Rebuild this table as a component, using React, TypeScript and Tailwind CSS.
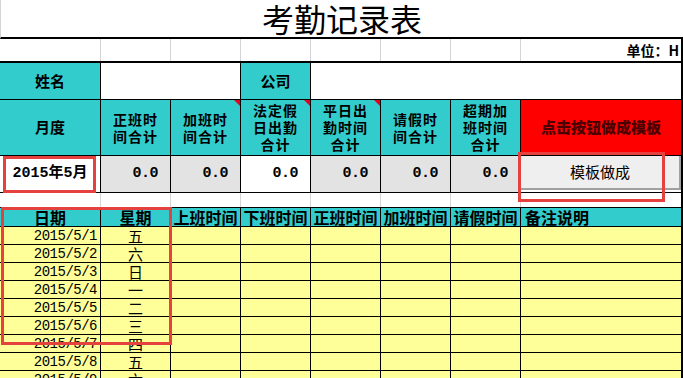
import React from "react";

const cjk = { fontFamily: '"Noto Sans CJK SC", "Liberation Sans", sans-serif' };
const mono = { fontFamily: '"Liberation Mono", "Noto Sans CJK SC", monospace' };

const days = [
  ["2015/5/1", "五"],
  ["2015/5/2", "六"],
  ["2015/5/3", "日"],
  ["2015/5/4", "一"],
  ["2015/5/5", "二"],
  ["2015/5/6", "三"],
  ["2015/5/7", "四"],
  ["2015/5/8", "五"],
  ["2015/5/9", "六"],
];

function Flag() {
  return (
    <span className="absolute right-0 top-0 h-0 w-0 border-l-[6px] border-t-[6px] border-l-transparent border-t-[#e8001c]" />
  );
}

function HeadCell({ lines, flag }: { lines: string[]; flag?: boolean }) {
  return (
    <div className="relative flex w-[70px] shrink-0 flex-col items-center justify-center border-r border-black bg-[#33cccc] text-[14px] font-bold leading-[17px] tracking-[1px] text-black">
      {lines.map((l) => (
        <span key={l} className="h-[17px]">
          {l}
        </span>
      ))}
      {flag && <Flag />}
    </div>
  );
}

function ValueCell({ white }: { white?: boolean }) {
  return (
    <div
      className={
        "flex w-[70px] shrink-0 items-center justify-end border-r border-black pr-[12px] text-[15px] font-bold tracking-[-0.5px] " +
        (white ? "bg-white" : "bg-[#e3e3e3]")
      }
      style={mono}
    >
      0.0
    </div>
  );
}

export default function App() {
  return (
    <div className="relative h-[378px] w-[683px] overflow-hidden bg-white text-black" style={cjk}>
      {/* title */}
      <div className="flex h-[39px] items-center justify-center border-b-2 border-black border-l border-l-[#d4d4d4] text-[32px] leading-[37px]">
        考勤记录表
      </div>

      <div className="border-r-2 border-black">
        {/* unit row */}
        <div className="flex h-[24px] border-b-2 border-black">
          <div className="w-[101px] shrink-0 border-r border-[#d4d4d4]" />
          <div className="w-[70px] shrink-0 border-r border-[#d4d4d4]" />
          <div className="w-[70px] shrink-0 border-r border-[#d4d4d4]" />
          <div className="w-[70px] shrink-0 border-r border-[#d4d4d4]" />
          <div className="w-[70px] shrink-0 border-r border-[#d4d4d4]" />
          <div className="w-[70px] shrink-0 border-r border-[#d4d4d4]" />
          <div className="w-[70px] shrink-0 border-r border-[#d4d4d4]" />
          <div className="flex flex-1 items-center justify-end pr-[2px] text-[14px] font-bold">单位：H</div>
        </div>

        {/* name row */}
        <div className="flex h-[37px] border-b border-black text-[15px] font-bold">
          <div className="flex w-[101px] shrink-0 items-center justify-center border-r border-black bg-[#33cccc]">姓名</div>
          <div className="w-[140px] shrink-0 border-r border-black" />
          <div className="flex w-[70px] shrink-0 items-center justify-center border-r border-black bg-[#33cccc]">公司</div>
          <div className="flex-1" />
        </div>

        {/* header row */}
        <div className="flex h-[56px] border-b border-black">
          <div className="flex w-[101px] shrink-0 items-center justify-center border-r border-black bg-[#33cccc] text-[15px] font-bold">
            月度
          </div>
          <HeadCell lines={["正班时", "间合计"]} />
          <HeadCell lines={["加班时", "间合计"]} flag />
          <HeadCell lines={["法定假", "日出勤", "合计"]} flag />
          <HeadCell lines={["平日出", "勤时间", "合计"]} flag />
          <HeadCell lines={["请假时", "间合计"]} />
          <HeadCell lines={["超期加", "班时间", "合计"]} />
          <div className="flex flex-1 items-center justify-center bg-[#ff0000] text-[15px] font-black text-[#4a0000]">
            点击按钮做成模板
          </div>
        </div>

        {/* value row */}
        <div className="flex h-[37px] border-b border-black">
          <div className="flex w-[101px] shrink-0 items-center justify-center border-r border-black text-[15px] font-bold" style={mono}>
            2015年5月
          </div>
          <ValueCell />
          <ValueCell />
          <ValueCell white />
          <ValueCell />
          <ValueCell />
          <ValueCell />
          <div className="flex-1 pb-[2px]">
            <button className="flex h-full w-full items-center justify-center border-b-2 border-r-2 border-[#a0a0a0] bg-[#efefef] text-[15px]">
              模板做成
            </button>
          </div>
        </div>

        {/* blank row */}
        <div className="flex h-[15px] border-b border-black">
          <div className="w-[101px] shrink-0 border-r border-[#d4d4d4]" />
          <div className="w-[70px] shrink-0 border-r border-[#d4d4d4]" />
          <div className="w-[70px] shrink-0 border-r border-[#d4d4d4]" />
          <div className="w-[70px] shrink-0 border-r border-[#d4d4d4]" />
          <div className="w-[70px] shrink-0 border-r border-[#d4d4d4]" />
          <div className="w-[70px] shrink-0 border-r border-[#d4d4d4]" />
          <div className="w-[70px] shrink-0 border-r border-[#d4d4d4]" />
          <div className="flex-1" />
        </div>

        {/* list header */}
        <div className="flex h-[19px] border-b border-black bg-[#33cccc] text-[16px] font-bold leading-none">
          <div className="flex w-[101px] shrink-0 items-center justify-center border-r border-black">日期</div>
          <div className="flex w-[70px] shrink-0 items-center justify-center border-r border-black">星期</div>
          <div className="flex w-[70px] shrink-0 items-center justify-center border-r border-black">上班时间</div>
          <div className="flex w-[70px] shrink-0 items-center justify-center border-r border-black">下班时间</div>
          <div className="flex w-[70px] shrink-0 items-center justify-center border-r border-black">正班时间</div>
          <div className="flex w-[70px] shrink-0 items-center justify-center border-r border-black">加班时间</div>
          <div className="flex w-[70px] shrink-0 items-center justify-center border-r border-black">请假时间</div>
          <div className="flex flex-1 items-center pl-[4px]">备注说明</div>
        </div>

        {/* list rows */}
        {days.map(([d, w]) => (
          <div key={d} className="flex h-[18px] border-b border-black bg-[#ffff99] text-[15px] leading-none">
            <div
              className="flex w-[101px] shrink-0 items-center justify-end border-r border-black pr-[3px] text-[14px] tracking-[-0.5px]"
              style={mono}
            >
              {d}
            </div>
            <div className="flex w-[70px] shrink-0 items-center justify-center border-r border-black">{w}</div>
            <div className="w-[70px] shrink-0 border-r border-black" />
            <div className="w-[70px] shrink-0 border-r border-black" />
            <div className="w-[70px] shrink-0 border-r border-black" />
            <div className="w-[70px] shrink-0 border-r border-black" />
            <div className="w-[70px] shrink-0 border-r border-black" />
            <div className="flex-1" />
          </div>
        ))}
      </div>

      {/* annotation boxes */}
      <div className="pointer-events-none absolute left-[3px] top-[156px] h-[37px] w-[93px] border-[3px] border-[#e5413f]" />
      <div className="pointer-events-none absolute left-[1px] top-[207px] h-[138px] w-[171px] border-[3px] border-[#e5413f]" />
      <div className="pointer-events-none absolute left-[518px] top-[152px] h-[50px] w-[147px] border-[3px] border-[#e5413f]" />
    </div>
  );
}
